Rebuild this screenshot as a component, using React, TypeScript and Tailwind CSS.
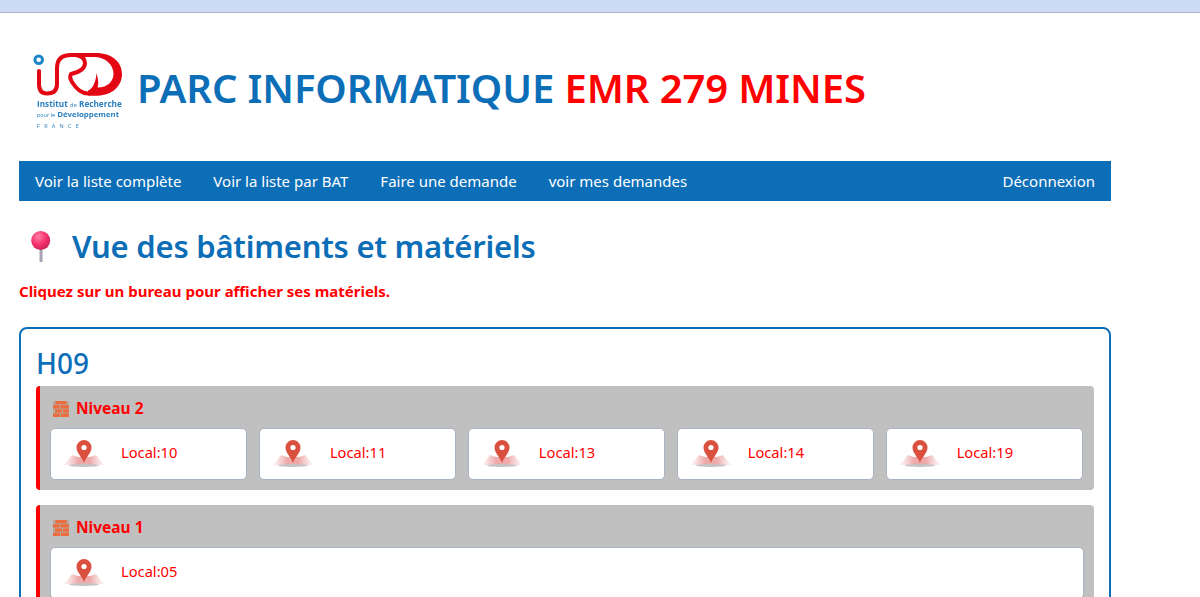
import React from 'react';

const BLUE = '#0d6eb8';

const IrdLogo = () => (
  <div className="w-[100px] shrink-0">
    <svg width="100" height="50" viewBox="0 0 100 50" fill="none" className="block blur-[0.3px]">
      <circle cx="10.7" cy="11.7" r="3.8" fill="#fff" stroke="#1c86c8" strokeWidth="3" />
      <path d="M11 23 V36 Q11 45.5 19 45.5 Q29 45.5 29 36 V20 Q29 7 43 7 H70" stroke="#e30613" strokeWidth="4" strokeLinecap="round" />
      <path d="M48 7 Q57 9 57 15 Q57 23 43 26 Q41 29 44 34 Q51 45.5 60 45.5 H70" stroke="#e30613" strokeWidth="4" strokeLinecap="round" strokeLinejoin="round" />
      <path d="M66 5 H68 C84 5 94 14 94 26 C94 38 84 47.5 70 47.5 H60 V42.5 C65 41 68 33 68.5 25 C70 31 71 35 69.5 39.5 C80 39.5 85.5 33 85.5 26 C85.5 17 78 9 66 9 Z" fill="#e30613" />
    </svg>
    <div className="font-['Open_Sans',sans-serif] text-[#2a7fbf] leading-none mt-[1px] blur-[0.2px]">
      <div className="text-[8.2px] font-bold h-[11px] pt-[1px] whitespace-nowrap pl-[9px]">Institut <span className="text-[6px] font-normal">de</span> Recherche</div>
      <div className="text-[7.8px] font-bold h-[11px] pt-[1px] whitespace-nowrap pl-[9px]"><span className="text-[5.5px] font-normal">pour le</span> Développement</div>
      <div className="text-[5.5px] tracking-[4.3px] pl-[9px] pt-[3px]">FRANCE</div>
    </div>
  </div>
);

const PinEmoji = () => (
  <svg width="24" height="31" viewBox="0 0 24 31" className="shrink-0">
    <defs>
      <radialGradient id="ball" cx="0.38" cy="0.3" r="0.8">
        <stop offset="0" stopColor="#ff7fa8" />
        <stop offset="0.5" stopColor="#f5336c" />
        <stop offset="1" stopColor="#c41f55" />
      </radialGradient>
    </defs>
    <rect x="10.5" y="14" width="3" height="17" fill="#aaa3b8" />
    <circle cx="11.7" cy="9.5" r="9.5" fill="url(#ball)" />
  </svg>
);

const BrickIcon = () => (
  <svg width="16" height="16" viewBox="0 0 16 16" className="shrink-0 blur-[0.2px]">
    <rect width="16" height="16" fill="#b5a89c" />
    <g fill="#ec6b3f">
      <rect x="2.5" y="0" width="11" height="3.3" />
      <rect x="0" y="4.2" width="6.5" height="3.3" />
      <rect x="7.5" y="4.2" width="8.5" height="3.3" />
      <rect x="2" y="8.4" width="7" height="3.3" />
      <rect x="10" y="8.4" width="6" height="3.3" />
      <rect x="0" y="12.6" width="7" height="3.4" />
      <rect x="8" y="12.6" width="8" height="3.4" />
    </g>
  </svg>
);

const MapPin = () => (
  <svg width="40" height="28" viewBox="0 0 40 28" className="shrink-0 blur-[0.4px]">
    <defs>
      <linearGradient id="fold" x1="0" y1="0" x2="1" y2="0">
        <stop offset="0" stopColor="#f6d5d5" stopOpacity="0.3" />
        <stop offset="0.35" stopColor="#eea9a9" />
        <stop offset="0.65" stopColor="#eea9a9" />
        <stop offset="1" stopColor="#f6d5d5" stopOpacity="0.3" />
      </linearGradient>
    </defs>
    <path d="M0 25 L8 15 L14 17 H26 L32 15 L40 25 Z" fill="url(#fold)" />
    <ellipse cx="20" cy="25.5" rx="15" ry="1.4" fill="#c4c4c4" />
    <path d="M20 23 C18 17 12.5 13 12.5 7.5 A7.5 7.5 0 0 1 27.5 7.5 C27.5 13 22 17 20 23 Z" fill="#d9503f" />
    <circle cx="20" cy="7.5" r="2.6" fill="#fff" />
  </svg>
);

const LocalCard = ({ label }: { label: string }) => (
  <div className="flex-1 h-[52px] bg-white border border-[#a9b4c2] rounded-[5px] flex items-center pl-[13px] gap-[17px] min-w-[190px]">
    <MapPin />
    <span className="text-[14.7px] text-[#ff0000] -mt-[3px]">Local:{label}</span>
  </div>
);

const Level = ({ name, locals }: { name: string; locals: string[] }) => (
  <div className="bg-[#c0c0c0] border-l-4 border-[#ff0000] rounded-[4px] pl-[10px] pr-[10px] pt-[14px] pb-[10px] mb-[15px]">
    <div className="flex items-center gap-[7px] h-[18px] pl-[3px] text-[15.5px] font-bold text-[#ff0000] mb-[10px]">
      <BrickIcon />
      <span>{name}</span>
    </div>
    <div className={locals.length > 1 ? 'flex gap-[12px] pr-[1.5px]' : 'flex gap-[12px]'}>
      {locals.map(l => <LocalCard key={l} label={l} />)}
    </div>
  </div>
);

export default function App() {
  const navLinks = ['Voir la liste complète', 'Voir la liste par BAT', 'Faire une demande', 'voir mes demandes'];

  return (
    <div className="h-screen overflow-hidden bg-white font-['Noto_Sans',sans-serif]">
      <div className="h-[13px] bg-[#cddcf6] border-b border-[#a9b4c8]" />
      <div className="w-[1092px] ml-[19px]">
        <div className="flex items-start h-[148px]">
          <div className="ml-[9px] mt-[35px]"><IrdLogo /></div>
          <h1 className="ml-[9px] mt-[49px] text-[40px] leading-[52px] font-semibold tracking-[-0.1px] whitespace-nowrap" style={{ color: BLUE }}>
            PARC INFORMATIQUE <span className="text-[#ff0000]">EMR 279 MINES</span>
          </h1>
        </div>

        <nav className="h-[40px] bg-[#0d6eb8] flex items-center justify-between px-[16px] text-[15px] text-white">
          <div className="flex gap-[32px]">
            {navLinks.map(link => <a key={link}>{link}</a>)}
          </div>
          <a>Déconnexion</a>
        </nav>

        <div className="flex items-center mt-[27px] h-[36px] pl-[10px]">
          <PinEmoji />
          <h2 className="ml-[19px] text-[31px] font-semibold tracking-[-0.23px] whitespace-nowrap text-[#0d6eb8]">Vue des bâtiments et matériels</h2>
        </div>
        <p className="mt-[17px] text-[15px] leading-[20px] font-bold text-[#ff0000]">Cliquez sur un bureau pour afficher ses matériels.</p>

        <div className="mt-[26px] border-2 border-[#0d6eb8] rounded-[8px] px-[15px] pt-[15px]">
          <h3 className="text-[28px] leading-[38px] h-[42px] font-medium text-[#0d6eb8]">H09</h3>
          <Level name="Niveau 2" locals={['10', '11', '13', '14', '19']} />
          <Level name="Niveau 1" locals={['05']} />
        </div>
      </div>
    </div>
  );
}
